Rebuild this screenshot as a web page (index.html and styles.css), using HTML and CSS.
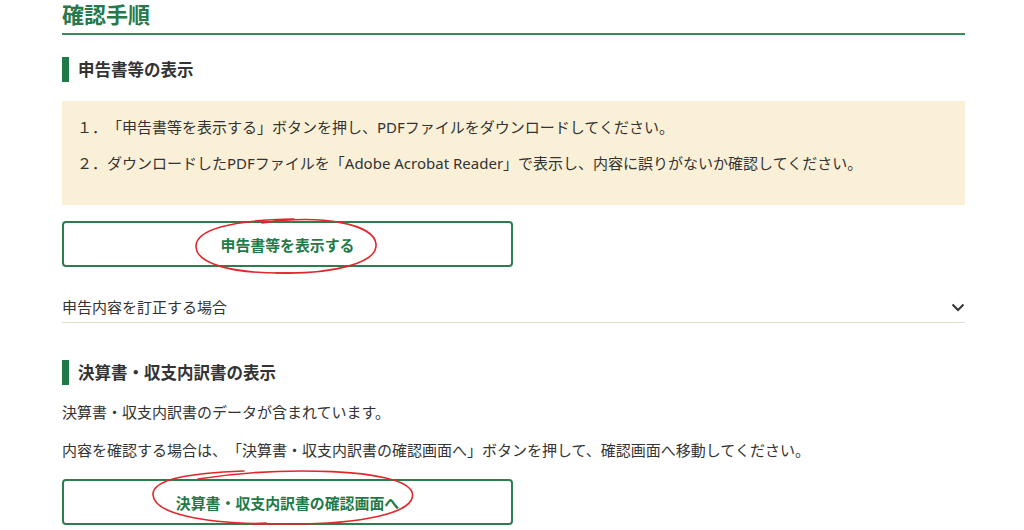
FILE: index.html
```html
<!DOCTYPE html>
<html lang="ja">
  <head>
    <meta charset="UTF-8" />
    <meta name="viewport" content="width=device-width, initial-scale=1.0" />
    <title>確認手順</title>
    <link rel="stylesheet" href="styles.css">
  </head>
  <body>
    <div class="page">
      <h2 class="page-title">確認手順</h2>

      <section class="block">
        <h3 class="block-title">申告書等の表示</h3>
        <div class="notice">
          <p>１．「申告書等を表示する」ボタンを押し、PDFファイルをダウンロードしてください。</p>
          <p>２．ダウンロードしたPDFファイルを「Adobe Acrobat Reader」で表示し、内容に誤りがないか確認してください。</p>
        </div>
        <button class="btn">申告書等を表示する</button>
        <div class="accordion">
          <span>申告内容を訂正する場合</span>
          <svg class="chevron" width="14" height="9" viewBox="0 0 14 9">
            <polyline points="1.5,1.5 7,7 12.5,1.5" fill="none" stroke="#333" stroke-width="2" />
          </svg>
        </div>
      </section>

      <section class="block second">
        <h3 class="block-title">決算書・収支内訳書の表示</h3>
        <p class="text">決算書・収支内訳書のデータが含まれています。</p>
        <p class="text">内容を確認する場合は、「決算書・収支内訳書の確認画面へ」ボタンを押して、確認画面へ移動してください。</p>
        <button class="btn">決算書・収支内訳書の確認画面へ</button>
      </section>
    </div>

    <!-- red pen marks on top of the screenshot -->
    <svg class="marks" width="1024" height="530" viewBox="0 0 1024 530">
      <path d="M262 223 C322 214 374 224 376 244 C378 264 330 274 280 273 C232 273 197 264 196 247 C195 230 230 220 294 219" />
      <path d="M276 273 L291 273" stroke-width="3" />
      <path d="M198 479 C280 466 402 468 412 492 C419 513 360 525 280 524 C200 524 154 513 153 495 C152 479 190 473 244 471" />
      <path d="M253 524 L266 523" stroke-width="3" />
    </svg>
  </body>
</html>
```

FILE: styles.css
```css
* {
  margin: 0;
  padding: 0;
  box-sizing: border-box;
}

body {
  font-family: "Noto Sans", "Noto Sans CJK JP", sans-serif;
  font-size: 15px;
  color: #333;
  background: #fff;
  overflow: hidden;
  text-spacing-trim: space-all;
}

.page {
  width: 903px;
  margin-left: 62px;
}

.page-title {
  font-size: 22px;
  line-height: 28px;
  font-weight: bold;
  color: #27784a;
  padding-bottom: 5px;
  border-bottom: 2px solid #3b8a5c;
}

.block-title {
  font-size: 16.5px;
  line-height: 25px;
  font-weight: bold;
  color: #333;
  border-left: 7px solid #1f7a47;
  padding-left: 9px;
  margin-top: 22px;
}

.block.second .block-title {
  margin-top: 37px;
}

.notice {
  background: #faf0d7;
  margin-top: 19px;
  padding: 15px 15px 31px;
}

.notice p {
  line-height: 22px;
}

.notice p + p {
  margin-top: 14px;
}

.btn {
  display: block;
  width: 451px;
  height: 46px;
  margin-top: 16px;
  background: #fff;
  border: 2px solid #2e7d4f;
  border-radius: 4px;
  font-family: inherit;
  font-size: 14.9px;
  font-weight: bold;
  color: #1e7b47;
  text-spacing-trim: space-all;
}

.block.second .btn {
  margin-top: 18px;
}

.accordion {
  display: flex;
  justify-content: space-between;
  align-items: center;
  margin-top: 29px;
  padding-bottom: 4px;
  line-height: 22px;
  border-bottom: 1px solid #e2ddcd;
}

.chevron {
  margin-right: 0;
}

.text {
  line-height: 22px;
  margin-top: 16px;
}

.marks {
  position: absolute;
  top: 0;
  left: 0;
  pointer-events: none;
}

.marks path {
  fill: none;
  stroke: #e3262b;
  stroke-width: 1.6;
  stroke-linecap: round;
}
```
